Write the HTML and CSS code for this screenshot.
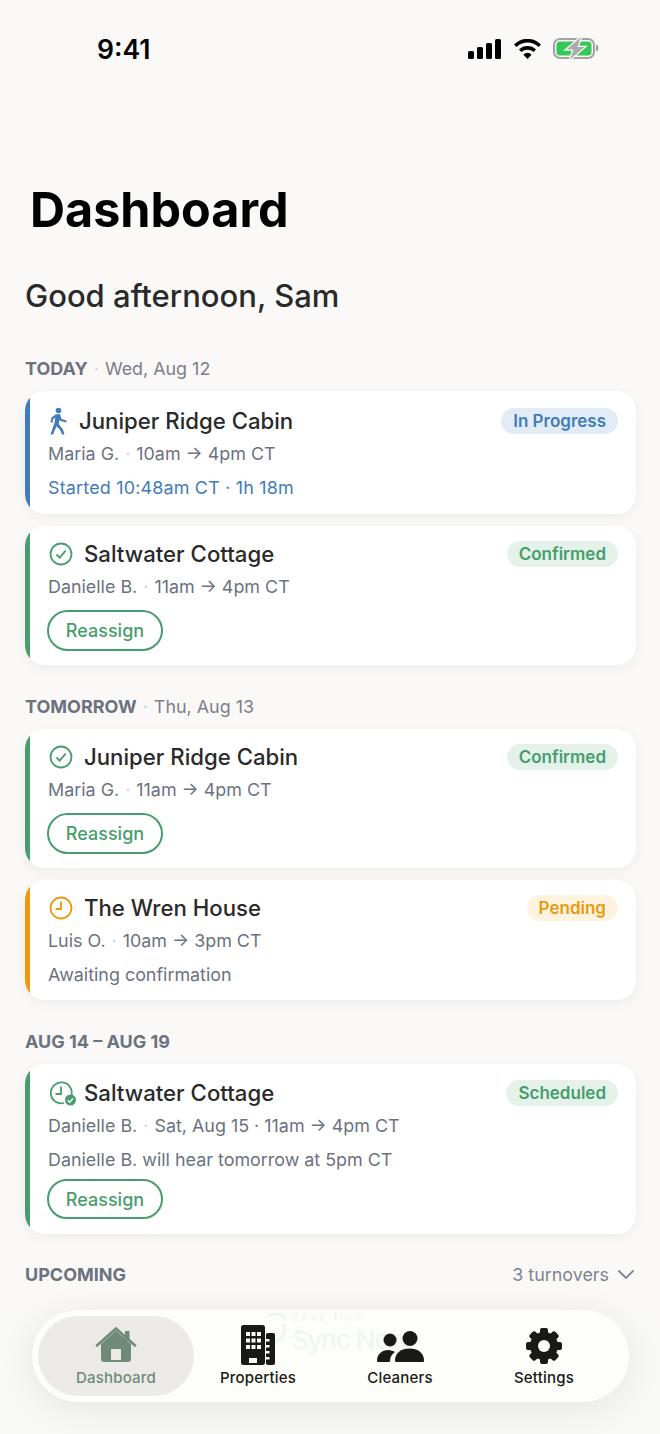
FILE: index.html
```html
<!DOCTYPE html>
<html lang="en">
<head>
    <meta charset="UTF-8">
    <title>Dashboard</title>
    <link rel="stylesheet" href="styles.css">
</head>
<body>
    <div class="status-bar">
        <span class="status-time">9:41</span>
        <div class="status-icons">
            <svg width="33" height="20" viewBox="0 0 33 20"><rect x="0" y="12" width="6" height="8" rx="1.500"/><rect x="9" y="8" width="6" height="12" rx="1.500"/><rect x="18" y="4" width="6" height="16" rx="1.500"/><rect x="27" y="0" width="6" height="20" rx="1.500"/></svg>
            <svg class="status-wifi" width="29" height="20" viewBox="0 0 30 22"><path d="M1.500 7.500a19 19 0 0 1 27 0" fill="none" stroke="#000" stroke-width="4"/><path d="M7 13a11.500 11.500 0 0 1 16 0" fill="none" stroke="#000" stroke-width="4"/><path d="M10.500 17.200a6 6 0 0 1 9 0L15 22z"/></svg>
            <svg width="46" height="24" viewBox="0 0 46 24"><rect x="1" y="2" width="40" height="19" rx="6" fill="none" stroke="#a3a3a3" stroke-width="2"/><rect x="3.500" y="4.500" width="35" height="14" rx="3.500" fill="#34c759"/><path d="M43 7.500c2 .5 2.500 2 2.500 3.500s-.5 3-2.500 3.500z" fill="#a3a3a3"/><path d="M28 0L13.500 12.500h7l-3.500 10L31.500 10h-7z" fill="#ababab" stroke="#fafaf8" stroke-width="2.500" paint-order="stroke"/></svg>
        </div>
    </div>

    <h1 class="page-title">Dashboard</h1>
    <h2 class="greeting">Good afternoon, Sam</h2>

    <div class="section-head"><strong>TODAY</strong><span class="dot">·</span><span>Wed, Aug 12</span></div>

    <div class="card card-blue">
        <div class="card-top">
            <svg class="icon-walk" width="20" height="28" viewBox="0 0 20 28" fill="#417cb8"><circle cx="10.500" cy="3.500" r="2.800"/><path d="M7.500 7.500l4.500-.5 1.500 5 5 1.500v2l-6-1.500-.8-1.500-1 4.500 4.300 5.500 1.500 5h-2.500l-1.800-4.500-3.700-3.700-3.500 8.200H2.500l4-11.500.8-5.500-2 1.500-.8 3.500H2.500l1-5z"/></svg>
            <span class="card-title">Juniper Ridge Cabin</span>
            <span class="badge badge-blue">In Progress</span>
        </div>
        <div class="card-meta">Maria G.<span class="dot">·</span>10am → 4pm CT</div>
        <div class="card-note note-blue">Started 10:48am CT · 1h 18m</div>
    </div>

    <div class="card card-green">
        <div class="card-top">
            <svg class="icon-status" width="26" height="26" viewBox="0 0 26 26" fill="none" stroke="#479e6c" stroke-width="1.800"><circle cx="13" cy="13" r="10.500"/><path d="M8.500 13.500l3.200 3.200 6-7"/></svg>
            <span class="card-title">Saltwater Cottage</span>
            <span class="badge badge-green">Confirmed</span>
        </div>
        <div class="card-meta">Danielle B.<span class="dot">·</span>11am → 4pm CT</div>
        <button class="reassign">Reassign</button>
    </div>

    <div class="section-head"><strong>TOMORROW</strong><span class="dot">·</span><span>Thu, Aug 13</span></div>

    <div class="card card-green">
        <div class="card-top">
            <svg class="icon-status" width="26" height="26" viewBox="0 0 26 26" fill="none" stroke="#479e6c" stroke-width="1.800"><circle cx="13" cy="13" r="10.500"/><path d="M8.500 13.500l3.200 3.200 6-7"/></svg>
            <span class="card-title">Juniper Ridge Cabin</span>
            <span class="badge badge-green">Confirmed</span>
        </div>
        <div class="card-meta">Maria G.<span class="dot">·</span>11am → 4pm CT</div>
        <button class="reassign">Reassign</button>
    </div>

    <div class="card card-orange">
        <div class="card-top">
            <svg class="icon-status" width="26" height="26" viewBox="0 0 26 26" fill="none" stroke="#e89b10" stroke-width="1.800"><circle cx="13" cy="13" r="10.500"/><path d="M13 6.500V14H7.500"/></svg>
            <span class="card-title">The Wren House</span>
            <span class="badge badge-orange">Pending</span>
        </div>
        <div class="card-meta">Luis O.<span class="dot">·</span>10am → 3pm CT</div>
        <div class="card-note">Awaiting confirmation</div>
    </div>

    <div class="section-head"><strong>AUG 14 – AUG 19</strong></div>

    <div class="card card-green card-scheduled">
        <div class="card-top">
            <svg class="icon-sched" width="28" height="26" viewBox="0 0 28 26" fill="none" stroke="#479e6c" stroke-width="1.800"><path d="M16 23a10.500 10.500 0 1 1 7.300-7"/><path d="M13 6.500V14H7.500"/><circle cx="22.500" cy="20" r="5.500" fill="#479e6c" stroke="none"/><path d="M19.800 20.200l2 2 3.200-3.700" stroke="#fff" stroke-width="1.500"/></svg>
            <span class="card-title">Saltwater Cottage</span>
            <span class="badge badge-green">Scheduled</span>
        </div>
        <div class="card-meta">Danielle B.<span class="dot">·</span>Sat, Aug 15 · 11am → 4pm CT</div>
        <div class="card-note">Danielle B. will hear tomorrow at 5pm CT</div>
        <button class="reassign reassign-tight">Reassign</button>
    </div>

    <div class="section-head section-upcoming">
        <strong>UPCOMING</strong>
        <span class="turnovers">3 turnovers
            <svg width="18" height="11" viewBox="0 0 18 11" fill="none" stroke="#7d8493" stroke-width="1.800"><path d="M1.500 1.500L9 9l7.500-7.500"/></svg>
        </span>
    </div>

    <!-- fade over the scrolled content, tab bar floats on top -->
    <div class="bottom-fade"></div>
    <nav class="tab-bar">
        <div class="ghost">
            <svg width="24" height="38" viewBox="0 0 24 38" fill="none" stroke="#edf6f0" stroke-width="3"><path d="M4 6c8-4 16-2 17 4M20 14c2 8-2 16-10 18"/></svg>
            <div class="ghost-text"><span class="ghost-small">SAVE from</span><span>Sync Now</span></div>
        </div>
        <div class="tab tab-active">
            <svg width="42" height="38" viewBox="0 0 42 38" fill="#6f8a78"><path d="M6 17L21 3.500 36 17v15a3 3 0 0 1-3 3H9a3 3 0 0 1-3-3z"/><path d="M2 18.500L21 1.500l19 17" fill="none" stroke="#6f8a78" stroke-width="2.600" stroke-linecap="round"/><rect x="30" y="4" width="4.500" height="9"/><rect x="16" y="22" width="10" height="11" fill="#ebeae7"/></svg>
            <span>Dashboard</span>
        </div>
        <div class="tab tab-narrow">
            <svg width="34" height="40" viewBox="0 0 34 40"><rect x="0" y="0" width="24" height="40" rx="2.500" fill="#191915"/><rect x="25" y="8" width="9" height="32" rx="2" fill="#191915"/><g fill="#fdfdfa"><rect x="5" y="7" width="4" height="4"/><rect x="10.500" y="7" width="4" height="4"/><rect x="16" y="7" width="4" height="4"/><rect x="5" y="13.500" width="4" height="4"/><rect x="10.500" y="13.500" width="4" height="4"/><rect x="16" y="13.500" width="4" height="4"/><rect x="5" y="20" width="4" height="4"/><rect x="10.500" y="20" width="4" height="4"/><rect x="16" y="20" width="4" height="4"/><rect x="8" y="33" width="8" height="5"/><rect x="25" y="14" width="3.500" height="2.500"/><rect x="25" y="20" width="3.500" height="2.500"/><rect x="25" y="26" width="3.500" height="2.500"/><rect x="25" y="32" width="3.500" height="2.500"/></g></svg>
            <span>Properties</span>
        </div>
        <div class="tab">
            <svg class="icon-cleaners" width="48" height="31" viewBox="0 0 48 31" fill="#191915"><circle cx="13" cy="9" r="6.500"/><circle cx="33" cy="7.500" r="7.500"/><path d="M0 30c0-7 5-11 11-11 3 0 5.500 1 7 2-3 2-5 5-5 9 0 .5-.5 1-1 1H1c-.5 0-1-.5-1-1z"/><path d="M18 29.500C18 22 24 17.500 32.500 17.500S47 22 47 29.500c0 1-.5 1.500-1.500 1.500h-26c-1 0-1.500-.5-1.500-1.500z"/></svg>
            <span>Cleaners</span>
        </div>
        <div class="tab tab-last">
            <svg width="38" height="38" viewBox="0 0 38 38"><g fill="#191915"><circle cx="19" cy="19" r="14"/><rect x="15" y="1" width="8" height="36" rx="2"/><rect x="15" y="1" width="8" height="36" rx="2" transform="rotate(45 19 19)"/><rect x="15" y="1" width="8" height="36" rx="2" transform="rotate(90 19 19)"/><rect x="15" y="1" width="8" height="36" rx="2" transform="rotate(135 19 19)"/></g><circle cx="19" cy="19" r="6" fill="#fdfdfa"/></svg>
            <span>Settings</span>
        </div>
    </nav>
</body>
</html>
```

FILE: styles.css
```css
* {
    box-sizing: border-box;
}
html, body {
    margin: 0;
    height: 100%;
}
body {
    position: relative;
    width: 660px;
    height: 1434px;
    overflow: hidden;
    padding: 0 24px 0 25px;
    background-color: #faf9f7;
    font-family: Inter, "Liberation Sans", sans-serif;
    color: #2a2a2a;
}
.status-bar {
    display: flex;
    justify-content: space-between;
    align-items: center;
    height: 24px;
    margin-top: 37px;
    padding: 0 37px 0 72px;
}
.status-time {
    font-size: 26.500px;
    font-weight: 600;
    color: #000;
}
.status-icons {
    display: flex;
    align-items: center;
    gap: 12px;
}
.status-wifi {
    margin-right: -1px;
}
.page-title {
    margin: 120px 0 0 5px;
    font-size: 48.500px;
    line-height: 58px;
    font-weight: 700;
    color: #000;
}
.greeting {
    margin: 37px 0 0;
    font-size: 31px;
    line-height: 40px;
    font-weight: 550;
}
.section-head {
    display: flex;
    align-items: center;
    height: 22px;
    margin: 41px 0 12px;
    font-size: 17.900px;
    color: #7a7f8c;
}
.section-head strong {
    font-size: 18px;
    font-weight: 700;
    color: #6b7280;
}
.dot {
    margin: 0 6px;
    color: #c9ccd2;
}
.card {
    display: flow-root;
    margin-bottom: 12px;
    padding: 13px 18px 14px 23px;
    border-radius: 20px;
    box-shadow: 0 3px 12px rgba(0,0,0,0.06);
}
.card-blue {
    padding-top: 15px;
    padding-bottom: 15px;
    background: linear-gradient(to right, #417cb8 5px, #fff 5px);
}
.card-green {
    background: linear-gradient(to right, #479e6c 5px, #fff 5px);
}
.card-orange {
    background: linear-gradient(to right, #e89b10 5px, #fff 5px);
}
.card-scheduled {
    padding-top: 14px;
    padding-bottom: 14px;
}
.card + .section-head {
    margin-top: 30px;
}
.card + .section-upcoming {
    margin-top: 29px;
}
.card-top {
    display: flex;
    align-items: center;
    height: 30px;
}
.icon-walk {
    margin-right: 11px;
}
.icon-status {
    margin-right: 10px;
    flex-shrink: 0;
}
.icon-sched {
    margin-right: 8px;
    flex-shrink: 0;
}
.card-title {
    flex: 1;
    padding-bottom: 2px;
    font-size: 22.200px;
    font-weight: 550;
}
.badge {
    padding: 3px 12px;
    border-radius: 13px;
    font-size: 17px;
    line-height: 20px;
    font-weight: 600;
}
.badge-blue { background: #e2ecf6; color: #417cb8; }
.badge-green { background: #e4f2ea; color: #479e6c; }
.badge-orange { background: #fdf3df; color: #e89b10; }
.card-meta, .card-note {
    font-size: 17.900px;
    line-height: 22px;
    color: #6b7280;
}
.card-meta {
    margin-top: 7px;
}
.card-note {
    margin-top: 12px;
}
.note-blue {
    letter-spacing: 0.2px;
    color: #417cb8;
}
.reassign {
    display: block;
    width: 116px;
    height: 41px;
    margin: 12px 0 0 -1px;
    background: none;
    border: 2px solid #479e6c;
    border-radius: 21px;
    font-family: inherit;
    font-size: 18px;
    font-weight: 500;
    color: #479e6c;
}
.reassign-tight {
    height: 40px;
    margin-top: 8px;
    margin-bottom: 1px;
}
.section-upcoming {
    justify-content: space-between;
}
.turnovers {
    display: flex;
    align-items: center;
    gap: 8px;
    padding-right: 1px;
    color: #7d8493;
}
.bottom-fade {
    position: absolute;
    left: 0;
    right: 0;
    bottom: 0;
    height: 150px;
    background: linear-gradient(to bottom, rgba(248,248,246,0), #f8f8f6 40%);
}
.tab-bar {
    position: absolute;
    left: 32px;
    top: 1310px;
    display: flex;
    width: 597px;
    height: 92px;
    padding: 6px;
    background: #fdfdfa;
    border-radius: 46px;
    box-shadow: 0 6px 36px rgba(0,0,0,0.08);
}
.ghost {
    position: absolute;
    left: 232px;
    top: 0;
    display: flex;
    gap: 4px;
    color: #edf6f0;
}
.ghost-text {
    display: flex;
    flex-direction: column;
    font-size: 26px;
    line-height: 32px;
    letter-spacing: -1px;
}
.ghost-small {
    font-size: 11px;
    line-height: 14px;
    letter-spacing: 2px;
}
.tab {
    position: relative;
    display: flex;
    flex: 0 0 156px;
    flex-direction: column;
    align-items: center;
    justify-content: flex-end;
    padding-bottom: 9px;
    gap: 3px;
    font-size: 15px;
    font-weight: 500;
    letter-spacing: 0.2px;
    color: #191915;
}
.tab-narrow {
    flex-basis: 128px;
}
.tab-last {
    flex-basis: 132px;
}
.tab-active {
    background: #ebeae7;
    border-radius: 40px;
    color: #6f8a78;
}
.icon-cleaners {
    margin: 0 0 3px 2px;
}
```
